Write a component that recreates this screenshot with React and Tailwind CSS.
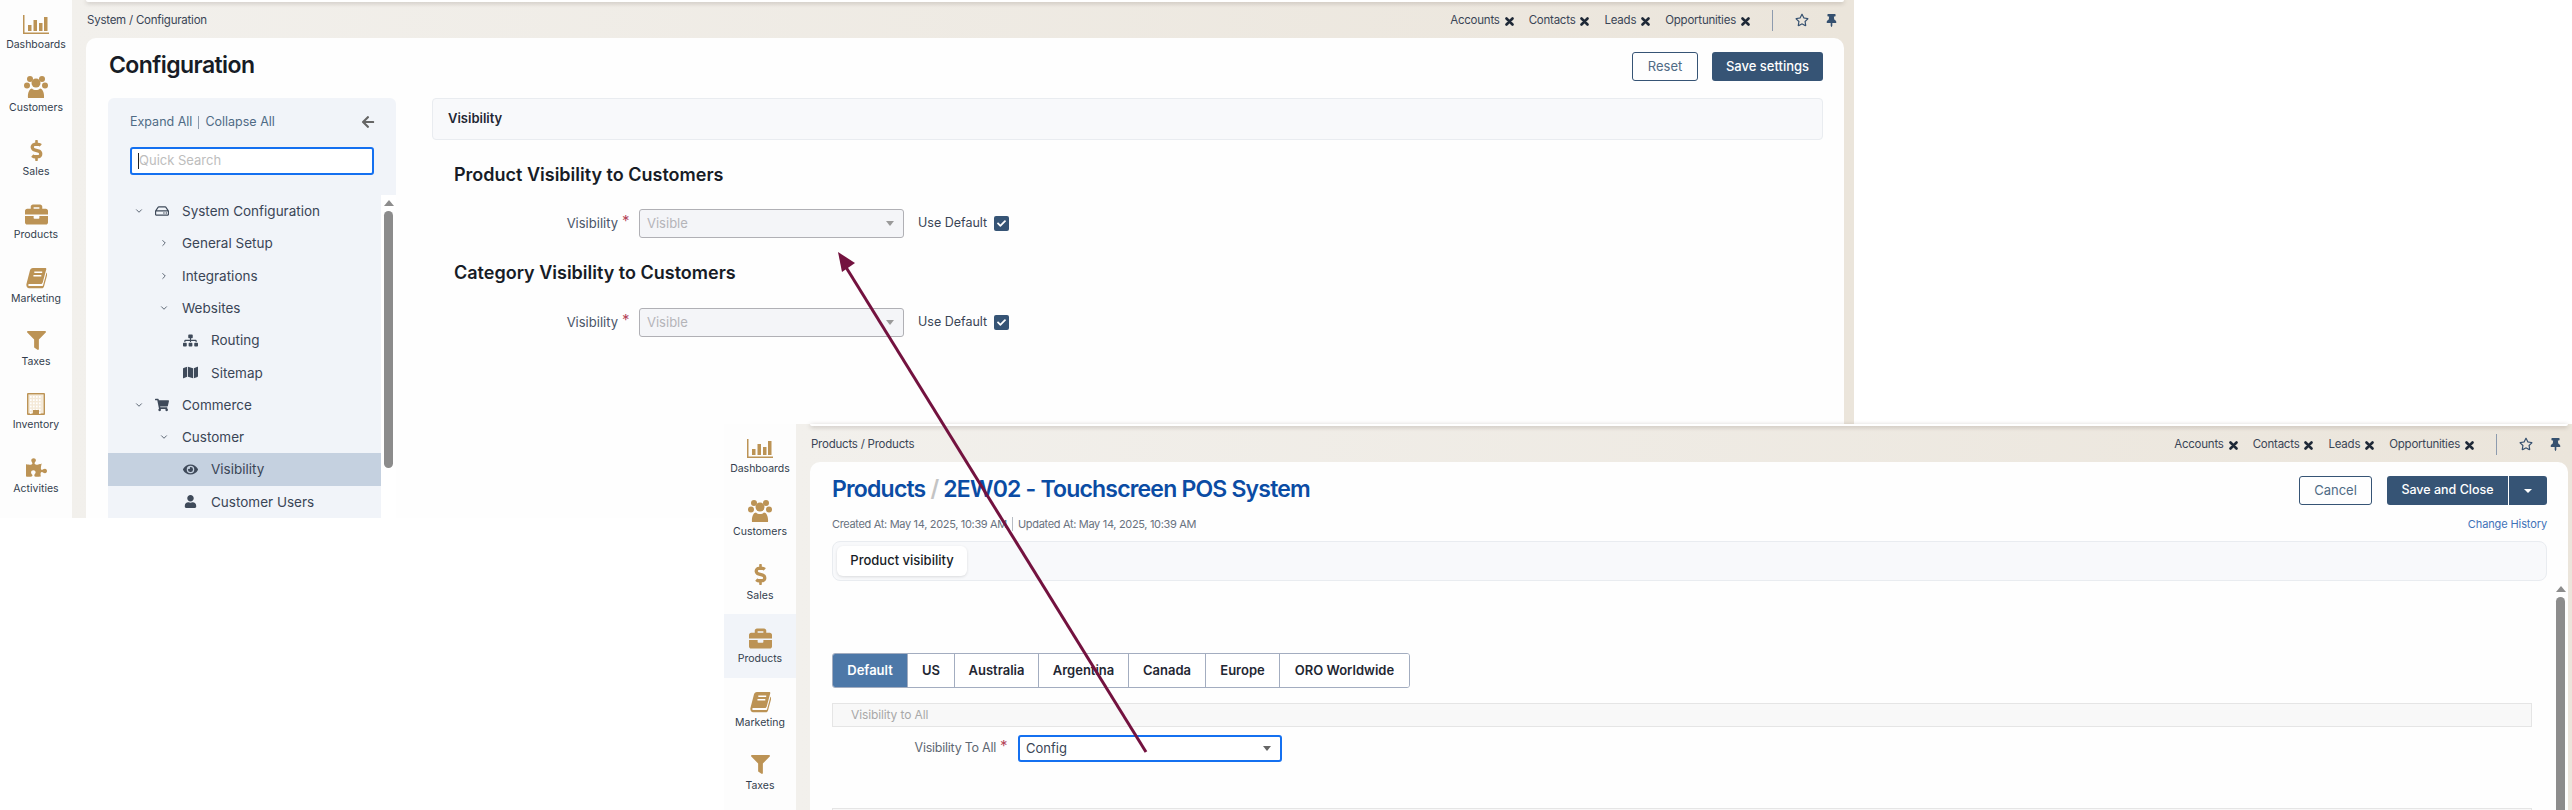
import { ChevronDown, ChevronRight } from "lucide-react";
import {
  FaArrowLeft,
  FaBriefcase,
  FaCheck,
  FaDollarSign,
  FaEye,
  FaFilter,
  FaMap,
  FaPuzzlePiece,
  FaRegHdd,
  FaRegStar,
  FaShoppingCart,
  FaSitemap,
  FaThumbtack,
  FaUser,
} from "react-icons/fa";

const TAN = "#bc9355";

function BarsIcon() {
  return (
    <svg width="26" height="19" viewBox="0 0 26 19" fill={TAN}>
      <rect x="0" y="0" width="1.5" height="19" />
      <rect x="0" y="17.5" width="26" height="1.5" />
      <rect x="5" y="10" width="3.5" height="6" />
      <rect x="10.5" y="5" width="3.5" height="11" />
      <rect x="16" y="8" width="3.5" height="8" />
      <rect x="21" y="2" width="3.5" height="14" />
    </svg>
  );
}

function PeopleIcon() {
  return (
    <svg width="24" height="22" viewBox="0 0 24 22" fill={TAN}>
      <circle cx="6" cy="3" r="3" />
      <circle cx="18" cy="3" r="3" />
      <circle cx="3" cy="9.5" r="3" />
      <circle cx="21" cy="9.5" r="3" />
      <circle cx="12" cy="7" r="4.5" />
      <path d="M4 22c-.6-5 1.5-9.5 4-9.5 1 1 2.4 1.5 4 1.5s3-.5 4-1.5c2.5 0 4.6 4.5 4 9.5z" />
    </svg>
  );
}

function BookIcon() {
  return (
    <svg width="21" height="23" viewBox="0 0 24 24">
      <path
        fill={TAN}
        d="M8 1h14c1 0 1.400.8 1.100 1.800l-4 15c-.3 1-1 1.700-2 1.700H4c-1.200 0-1.600.8-1.300 1.500.2.5.8.8 1.500.8h14c.6 0 1-.3 1.200-.8l4-14.500.9.600c.2.5.2 1 0 1.600l-3.800 13.800c-.3 1-1.200 1.800-2.200 1.800H3.500C1.500 24 0 22 .5 19.500L4.500 4C5 2 6 1 8 1z"
      />
      <path stroke="#fff" strokeWidth="1.500" d="M9.500 6h9M8.500 10h9" />
    </svg>
  );
}

function BuildingIcon() {
  const dots = [];
  for (let y = 3; y < 20; y += 3.2) {
    for (let x = 3; x < 15; x += 3) {
      dots.push(<rect key={`${x}-${y}`} x={x} y={y} width="1.6" height="1.8" fill="#fff" />);
    }
  }
  return (
    <svg width="18" height="22" viewBox="0 0 18 22">
      <rect width="18" height="22" rx="1" fill={TAN} />
      <rect x="1.4" y="1.4" width="15.2" height="19" fill="#f4e9d8" />
      <g>{dots}</g>
      <rect x="6" y="17" width="6" height="5" fill={TAN} />
    </svg>
  );
}

function CloseIcon() {
  return (
    <svg width="9" height="9" viewBox="0 0 9 9" stroke="#1f2937" strokeWidth="2.600" strokeLinecap="round">
      <path d="M1.500 1.500l6 6M7.500 1.500l-6 6" />
    </svg>
  );
}

const NAV = [
  { label: "Dashboards", icon: <BarsIcon /> },
  { label: "Customers", icon: <PeopleIcon /> },
  { label: "Sales", icon: <FaDollarSign size={21} color={TAN} /> },
  { label: "Products", icon: <FaBriefcase size={23} color={TAN} /> },
  { label: "Marketing", icon: <BookIcon /> },
  { label: "Taxes", icon: <FaFilter size={19} color={TAN} /> },
  { label: "Inventory", icon: <BuildingIcon /> },
  { label: "Activities", icon: <FaPuzzlePiece size={21} color={TAN} /> },
];

function Sidebar({ active, count }) {
  return (
    <div className="w-[72px] shrink-0 bg-[#fdfdfd] overflow-hidden">
      {NAV.slice(0, count).map((item) => (
        <div
          key={item.label}
          className={`h-[63.4px] flex flex-col items-center ${
            item.label === active ? "bg-[#f1f4f9]" : ""
          }`}
        >
          <div className="h-[26px] mt-[11px] flex items-center justify-center">{item.icon}</div>
          <span className="mt-[1px] text-[10.5px] leading-[14px] text-[#333d4d]">{item.label}</span>
        </div>
      ))}
    </div>
  );
}

function PinnedLink({ name }) {
  return (
    <span className="flex items-center gap-[5px] text-[11.5px] tracking-[-0.02em] text-[#3a4556]">
      {name}
      <CloseIcon />
    </span>
  );
}

function Shell({ crumb, active, count, children }) {
  return (
    <div className="flex h-full">
      <Sidebar active={active} count={count} />
      <div className="flex-1 flex flex-col min-w-0 bg-linear-to-r from-[#f2f0ec] to-[#ebe5db]">
        <div className="h-[2px] ml-[14px] mr-[10px] bg-white rounded-b shadow-[0_1px_4px_rgba(60,50,40,0.35)]" />
        <div className="h-[36px] flex items-center justify-between pl-[15px] pr-[16px]">
          <span className="mt-[2px] text-[11.5px] tracking-[-0.02em] text-[#3a4556]">{crumb}</span>
          <div className="flex items-center">
            <div className="mt-[2px] flex items-center gap-[15px]">
              <PinnedLink name="Accounts" />
              <PinnedLink name="Contacts" />
              <PinnedLink name="Leads" />
              <PinnedLink name="Opportunities" />
            </div>
            <div className="w-px h-[21px] bg-[#8d9bae] ml-[22px]" />
            <FaRegStar size={14} color="#35506f" className="ml-[22px]" />
            <FaThumbtack size={13} color="#35506f" className="ml-[16px]" />
          </div>
        </div>
        <div className="flex-1 min-h-0 ml-[14px] mr-[10px] bg-[#fefefe] rounded-t-[10px] flex flex-col">
          {children}
        </div>
      </div>
    </div>
  );
}

const TREE = [
  { name: "System Configuration", level: 0, open: true, icon: <FaRegHdd size={14} /> },
  { name: "General Setup", level: 1 },
  { name: "Integrations", level: 1 },
  { name: "Websites", level: 1, open: true },
  { name: "Routing", level: 2, icon: <FaSitemap size={15} /> },
  { name: "Sitemap", level: 2, icon: <FaMap size={15} /> },
  { name: "Commerce", level: 0, open: true, icon: <FaShoppingCart size={14} /> },
  { name: "Customer", level: 1, open: true },
  { name: "Visibility", level: 2, icon: <FaEye size={15} />, selected: true },
  { name: "Customer Users", level: 2, icon: <FaUser size={13} /> },
];

function Chevron({ open }) {
  return (
    <span className="w-[10px] flex justify-center text-[#3f4a5a]">
      {open ? <ChevronDown size={14} strokeWidth={2} /> : <ChevronRight size={14} strokeWidth={2} />}
    </span>
  );
}

function TreeRow({ row }) {
  return (
    <div
      className={`h-[32.3px] flex items-center text-[13.5px] text-[#3a4556] ${
        row.selected ? "bg-[#c5d1e0]" : ""
      }`}
    >
      {row.level === 0 && (
        <div className="flex items-center pl-[26px]">
          <Chevron open={row.open} />
          <span className="ml-[6px] w-[24px] flex justify-center text-[#3f4a5a]">{row.icon}</span>
          <span className="ml-[8px]">{row.name}</span>
        </div>
      )}
      {row.level === 1 && (
        <div className="flex items-center pl-[51px]">
          <Chevron open={row.open} />
          <span className="ml-[13px]">{row.name}</span>
        </div>
      )}
      {row.level === 2 && (
        <div className="flex items-center pl-[70px]">
          <span className="w-[24px] flex justify-center text-[#3f4a5a]">{row.icon}</span>
          <span className="ml-[9px]">{row.name}</span>
        </div>
      )}
    </div>
  );
}

function UpArrow() {
  return <div className="w-0 h-0 border-x-[5px] border-x-transparent border-b-[6px] border-b-[#8c8c8c]" />;
}

function ConfigTree() {
  return (
    <div className="w-[288px] shrink-0 bg-[#f1f4f9] rounded-t-md flex flex-col">
      <div className="px-[22px] pt-[12px]">
        <div className="h-[24px] flex items-center text-[12.5px] text-[#4f6b85]">
          <span>Expand All</span>
          <span className="w-px h-[13px] bg-[#8d9bae] mx-[6px]" />
          <span>Collapse All</span>
          <FaArrowLeft size={14} color="#666" className="ml-auto -mr-px" />
        </div>
        <div className="mt-[13px] h-[28px] bg-white border-2 border-[#1470f0] rounded-[3px] flex items-center pl-[6px] text-[13px] text-[#bdbdbd]">
          <span className="w-px h-[16px] bg-[#222]" />
          Quick Search
        </div>
      </div>
      <div className="mt-[20px] flex-1 min-h-0 flex overflow-hidden">
        <div className="flex-1">
          {TREE.map((row) => (
            <TreeRow key={row.name} row={row} />
          ))}
        </div>
        <div className="w-[15px] bg-white flex flex-col items-center pt-[5px]">
          <UpArrow />
          <div className="mt-[5px] w-[9px] h-[257px] bg-[#8c8c8c] rounded-full" />
        </div>
      </div>
    </div>
  );
}

function DisabledRow({ className }) {
  return (
    <div className={`${className} flex items-center h-[29px]`}>
      <span className="w-[186px] text-right text-[13px] text-[#4a5568]">Visibility</span>
      <span className="w-[21px] pl-[4px] text-[15px] leading-none text-[#b5475a] -mt-[6px]">*</span>
      <div className="w-[265px] h-[29px] bg-[#f4f5f8] border border-[#b0b0b5] rounded-[3px] flex items-center justify-between pl-[7px] pr-[9px] text-[13px] text-[#b4b4b8]">
        Visible
        <div className="w-0 h-0 border-x-[4px] border-x-transparent border-t-[5px] border-t-[#9a9a9a]" />
      </div>
      <span className="ml-[14px] text-[12.5px] text-[#3a4556]">Use Default</span>
      <span className="ml-[7px] w-[15px] h-[15px] rounded-[2px] bg-[#365475] flex items-center justify-center">
        <FaCheck size={9} color="#fff" />
      </span>
    </div>
  );
}

function ConfigPage() {
  return (
    <>
      <div className="flex items-start justify-between pl-[23px] pr-[21px] pt-[13px] h-[60px]">
        <h1 className="text-[23px] leading-[29px] font-semibold tracking-[-0.025em] text-[#171c26]">
          Configuration
        </h1>
        <div className="flex gap-[14px] mt-px">
          <button className="w-[66px] h-[29px] rounded-[3px] border border-[#365475] text-[13px] text-[#4f6b85]">
            Reset
          </button>
          <button className="w-[111px] h-[29px] rounded-[3px] bg-[#365475] text-[13px] font-medium text-white">
            Save settings
          </button>
        </div>
      </div>
      <div className="flex-1 min-h-0 flex gap-[36px] pl-[22px] pr-[21px]">
        <ConfigTree />
        <div className="flex-1 min-w-0">
          <div className="h-[42px] bg-[#f8f9fb] border border-[#e9ecf0] rounded flex items-center pl-[15px] text-[13px] font-semibold text-[#1f2733]">
            Visibility
          </div>
          <h2 className="mt-[22px] pl-[22px] text-[18px] leading-[26px] font-semibold text-[#171c26]">
            Product Visibility to Customers
          </h2>
          <DisabledRow className="mt-[21px]" />
          <h2 className="mt-[22px] pl-[22px] text-[18px] leading-[26px] font-semibold text-[#171c26]">
            Category Visibility to Customers
          </h2>
          <DisabledRow className="mt-[22px]" />
        </div>
      </div>
    </>
  );
}

const REGIONS = [
  { name: "Default", width: "w-[75px]", active: true },
  { name: "US", width: "w-[47px]" },
  { name: "Australia", width: "w-[84px]" },
  { name: "Argentina", width: "w-[90px]" },
  { name: "Canada", width: "w-[77px]" },
  { name: "Europe", width: "w-[74px]" },
  { name: "ORO Worldwide", width: "w-[129px]" },
];

function ProductPage() {
  return (
    <>
      <div className="flex items-start justify-between pl-[22px] pr-[21px] pt-[13px]">
        <h1 className="text-[23px] leading-[29px] font-semibold tracking-[-0.035em] text-[#0b4ca4]">
          Products <span className="text-[#c4c4c4]">/</span> 2EW02 - Touchscreen POS System
        </h1>
        <div className="flex gap-[15px] mt-px">
          <button className="w-[73px] h-[29px] rounded-[3px] border border-[#365475] text-[13px] text-[#4f6b85]">
            Cancel
          </button>
          <div className="w-[160px] h-[29px] rounded-[3px] bg-[#365475] flex text-[12.5px] font-medium text-white">
            <span className="w-[121px] flex items-center justify-center">Save and Close</span>
            <span className="w-px bg-white" />
            <span className="flex-1 flex items-center justify-center">
              <span className="w-0 h-0 border-x-[4px] border-x-transparent border-t-[4px] border-t-white" />
            </span>
          </div>
        </div>
      </div>
      <div className="mt-[11px] h-[16px] flex items-center justify-between pl-[22px] pr-[21px] text-[11px] tracking-[-0.03em] text-[#69727f]">
        <div className="flex items-center">
          <span>Created At: May 14, 2025, 10:39 AM</span>
          <span className="w-px h-[14px] bg-[#b8bdc4] mx-[5px]" />
          <span>Updated At: May 14, 2025, 10:39 AM</span>
        </div>
        <span className="text-[#3f72b8] tracking-[-0.01em]">Change History</span>
      </div>
      <div className="mt-[9px] ml-[22px] mr-[21px] h-[40px] bg-[#f8f9fb] border border-[#e9ecf0] rounded-lg flex items-center pl-[4px]">
        <div className="w-[130px] h-[30px] bg-white rounded-md shadow-[0_1px_3px_rgba(0,0,0,0.12)] flex items-center justify-center text-[13px] font-medium text-[#171c26]">
          Product visibility
        </div>
      </div>
      <div className="flex-1 min-h-0 flex overflow-hidden">
        <div className="flex-1 min-w-0 pl-[22px]">
          <div className="mt-[72px] flex w-fit h-[35px] border border-[#a3adc0] rounded-[3px] overflow-hidden">
            {REGIONS.map((region) => (
              <div
                key={region.name}
                className={`${region.width} flex items-center justify-center text-[13px] font-semibold border-r border-[#a3adc0] last:border-r-0 ${
                  region.active ? "bg-[#4d78a8] text-white" : "bg-white text-[#1f2733]"
                }`}
              >
                {region.name}
              </div>
            ))}
          </div>
          <div className="mt-[15px] h-[24px] bg-[#f8f8f8] border border-[#e5e5e5] flex items-center pl-[18px] text-[12px] tracking-[-0.01em] text-[#a8a8a8]">
            Visibility to All
          </div>
          <div className="mt-[8px] h-[27px] flex items-center">
            <span className="w-[164px] text-right text-[12.5px] tracking-[-0.02em] text-[#5f6873]">
              Visibility To All
            </span>
            <span className="w-[22px] pl-[4px] text-[15px] leading-none text-[#b5475a] -mt-[6px]">*</span>
            <div className="w-[264px] h-[27px] bg-white border-2 border-[#1470f0] rounded-[3px] flex items-center justify-between pl-[6px] pr-[9px] text-[13px] text-[#3a4556]">
              Config
              <div className="w-0 h-0 border-x-[4px] border-x-transparent border-t-[5px] border-t-[#666]" />
            </div>
          </div>
          <div className="mt-[46px] h-[24px] bg-[#f8f8f8] border border-[#e5e5e5]" />
        </div>
        <div className="w-[36px] shrink-0 flex flex-col items-start pl-[24px] pt-[5px]">
          <div className="w-[9px] flex justify-center">
            <UpArrow />
          </div>
          <div className="mt-[5px] w-[9px] flex-1 bg-[#8c8c8c] rounded-t-full" />
        </div>
      </div>
    </>
  );
}

export default function App() {
  return (
    <div className="relative w-[2572px] h-[810px] overflow-hidden bg-white font-['Inter',sans-serif]">
      <div className="absolute left-0 top-0 w-[1854px] h-[518px]">
        <Shell crumb="System / Configuration" count={8}>
          <ConfigPage />
        </Shell>
      </div>
      <div className="absolute left-[724px] top-[424px] w-[1854px] h-[386px]">
        <Shell crumb="Products / Products" active="Products" count={6}>
          <ProductPage />
        </Shell>
      </div>
      {/* callout arrow pasted over both screenshots */}
      <svg className="absolute left-0 top-0 pointer-events-none" width="2572" height="810">
        <line x1="1146" y1="752" x2="844" y2="264" stroke="#73123f" strokeWidth="3" />
        <path d="M838 252 L855 263 L842 272 Z" fill="#73123f" />
      </svg>
    </div>
  );
}
